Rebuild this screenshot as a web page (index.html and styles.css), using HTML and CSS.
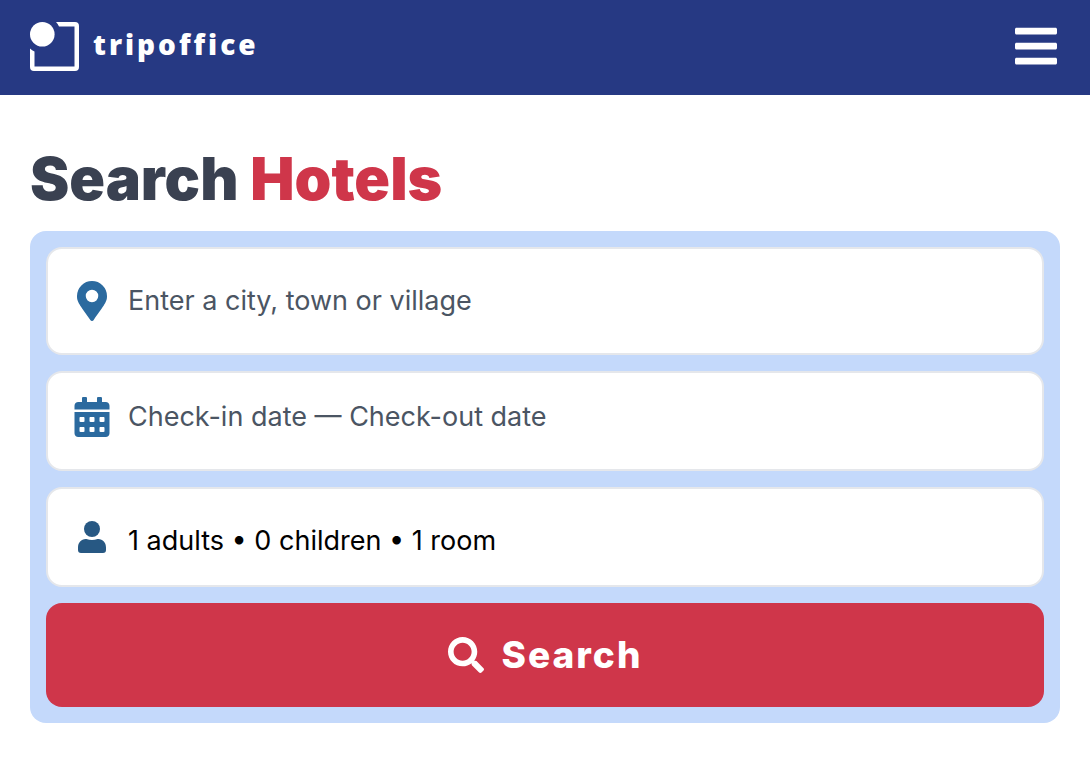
FILE: index.html
```html
<!DOCTYPE html>
<html lang="en">
<head>
<meta charset="utf-8">
<meta name="viewport" content="width=device-width, initial-scale=1">
<title>tripoffice – Search Hotels</title>
<link rel="stylesheet" href="styles.css">
</head>
<body>
<header class="site-header">
  <a class="brand" href="#">
    <svg class="brand-mark" viewBox="0 0 49 49" aria-hidden="true">
      <path d="M26 0H45Q49 0 49 4V45Q49 49 45 49H4Q0 49 0 45V26.500Q2 28.500 4.500 29.500V44.500H44.500V4.500H29Q28 2 26 0Z" fill="#fff"/>
      <circle cx="12.300" cy="12.300" r="12.300" fill="#fff"/>
    </svg>
    <span class="brand-name">tripoffice</span>
  </a>
  <button class="menu-button" type="button" aria-label="Open menu">
    <svg class="menu-icon" viewBox="0 0 448 512" aria-hidden="true"><path fill="currentColor" d="M16 132h416c8.837 0 16-7.163 16-16V76c0-8.837-7.163-16-16-16H16C7.163 60 0 67.163 0 76v40c0 8.837 7.163 16 16 16zm0 160h416c8.837 0 16-7.163 16-16v-40c0-8.837-7.163-16-16-16H16c-8.837 0-16 7.163-16 16v40c0 8.837 7.163 16 16 16zm0 160h416c8.837 0 16-7.163 16-16v-40c0-8.837-7.163-16-16-16H16c-8.837 0-16 7.163-16 16v40c0 8.837 7.163 16 16 16z"/></svg>
  </button>
</header>
<main class="page">
  <h1 class="title">Search <span class="title-accent">Hotels</span></h1>
  <form class="search-panel">
    <label class="field field-place">
      <svg class="field-icon" viewBox="0 0 36 40" aria-hidden="true"><path fill="currentColor" fill-rule="evenodd" d="M16.500 39.200C5.300 23 3 21.200 3 15a15 15 0 0 1 30 0c0 6.200-2.300 8-13.500 24.200a1.800 1.800 0 0 1-3 0zM18 21.250a6.250 6.250 0 1 0 0-12.500 6.250 6.250 0 0 0 0 12.500z"/></svg>
      <input class="field-input" type="text" placeholder="Enter a city, town or village" aria-label="Destination">
    </label>
    <button class="field field-dates" type="button">
      <svg class="field-icon" viewBox="0 0 448 512" aria-hidden="true"><path fill="currentColor" d="M0 464c0 26.500 21.500 48 48 48h352c26.500 0 48-21.500 48-48V192H0v272zm320-196c0-6.600 5.400-12 12-12h40c6.600 0 12 5.400 12 12v40c0 6.600-5.400 12-12 12h-40c-6.600 0-12-5.400-12-12v-40zm0 128c0-6.600 5.400-12 12-12h40c6.600 0 12 5.400 12 12v40c0 6.600-5.400 12-12 12h-40c-6.600 0-12-5.400-12-12v-40zM192 268c0-6.600 5.400-12 12-12h40c6.600 0 12 5.400 12 12v40c0 6.600-5.400 12-12 12h-40c-6.600 0-12-5.400-12-12v-40zm0 128c0-6.600 5.400-12 12-12h40c6.600 0 12 5.400 12 12v40c0 6.600-5.400 12-12 12h-40c-6.600 0-12-5.400-12-12v-40zM64 268c0-6.600 5.400-12 12-12h40c6.600 0 12 5.400 12 12v40c0 6.600-5.400 12-12 12H76c-6.600 0-12-5.400-12-12v-40zm0 128c0-6.600 5.400-12 12-12h40c6.600 0 12 5.400 12 12v40c0 6.600-5.400 12-12 12H76c-6.600 0-12-5.400-12-12v-40zM400 64h-48V16c0-8.800-7.200-16-16-16h-32c-8.800 0-16 7.200-16 16v48H160V16c0-8.800-7.200-16-16-16h-32c-8.800 0-16 7.200-16 16v48H48C21.500 64 0 85.500 0 112v48h448v-48c0-26.500-21.500-48-48-48z"/></svg>
      <span class="field-text">Check-in date — Check-out date</span>
    </button>
    <button class="field field-guests" type="button">
      <svg class="field-icon" viewBox="0 0 36 40" aria-hidden="true"><g fill="currentColor"><circle cx="18" cy="12" r="8"/><path d="M12.400 22q5.600 2 11.200 0C28.500 21.600 32 25.400 32 30.400V33q0 3-3 3H7q-3 0-3-3V30.400C4 25.400 7.500 21.600 12.400 22Z"/></g></svg>
      <span class="field-text">1 adults • 0 children • 1 room</span>
    </button>
    <button class="search-button" type="submit">
      <svg class="search-icon" viewBox="0 0 512 512" aria-hidden="true"><path fill="currentColor" d="M505 442.700L405.300 343c-4.500-4.500-10.600-7-17-7H372c27.600-35.300 44-79.700 44-128C416 93.100 322.900 0 208 0S0 93.100 0 208s93.100 208 208 208c48.300 0 92.700-16.400 128-44v16.300c0 6.400 2.500 12.500 7 17l99.700 99.700c9.400 9.400 24.600 9.400 33.900 0l28.300-28.300c9.400-9.400 9.400-24.600.1-34zM208 336c-70.700 0-128-57.200-128-128 0-70.700 57.200-128 128-128 70.700 0 128 57.200 128 128 0 70.700-57.200 128-128 128z"/></svg>
      <span>Search</span>
    </button>
  </form>
</main>
</body>
</html>
```
FILE: styles.css
```css
* { box-sizing: border-box; }

body {
  margin: 0;
  background: #fff;
  color: #000;
  font-family: Inter, "Liberation Sans", sans-serif;
}

button, input { font: inherit; }
button { cursor: pointer; }
svg { display: block; flex: none; }

.site-header {
  display: flex;
  align-items: center;
  justify-content: space-between;
  padding: 22px 33px 24px 30px;
  background: #263983;
  color: #fff;
}

.brand {
  display: flex;
  align-items: center;
  gap: 14px;
  color: #fff;
  text-decoration: none;
}
.brand-mark { width: 49px; height: 49px; }
.brand-name {
  font: 900 28px/44px "Noto Sans", "Open Sans", sans-serif;
  letter-spacing: 3px;
  padding-bottom: 5px;
}

.menu-button {
  padding: 0 0 1px;
  border: 0;
  background: none;
  color: inherit;
}
.menu-icon { width: 42px; height: 48px; }

.page { padding: 46px 30px 40px; }

.title {
  margin: 0 0 14px;
  font-size: 59px;
  font-weight: 900;
  line-height: 76px;
  color: #3a4151;
}
.title-accent { color: #cf364a; }

.search-panel {
  display: flex;
  flex-direction: column;
  gap: 16px;
  padding: 16px;
  border-radius: 16px;
  background: #c4d9fb;
}

.field {
  display: flex;
  align-items: center;
  gap: 18px;
  width: 100%;
  padding: 24px 26px;
  border: 2px solid #e5e7eb;
  border-radius: 16px;
  background: #fff;
  color: #4b5563;
  font-size: 27px;
  line-height: 40px;
  text-align: left;
}
.field-place { padding-block: 32px; }
.field-dates { padding-block: 24px 32px; }
.field-guests { color: #000; }
.field-guests .field-text { padding-top: 8px; }
.field-icon { width: 36px; height: 40px; color: #2b6a9f; }
.field-guests .field-icon { color: #275883; }

.field-input {
  flex: 1;
  min-width: 0;
  height: 40px;
  padding: 0;
  border: 0;
  outline: 0;
  background: none;
  color: #000;
}
.field-input::placeholder { color: #4b5563; opacity: 1; }

.search-button {
  display: flex;
  align-items: center;
  justify-content: center;
  gap: 18px;
  padding: 28px;
  border: 0;
  border-radius: 16px;
  background: #cf364a;
  color: #fff;
  font-size: 37px;
  font-weight: 800;
  line-height: 48px;
  letter-spacing: 2px;
}
.search-icon { width: 36px; height: 36px; }
```
